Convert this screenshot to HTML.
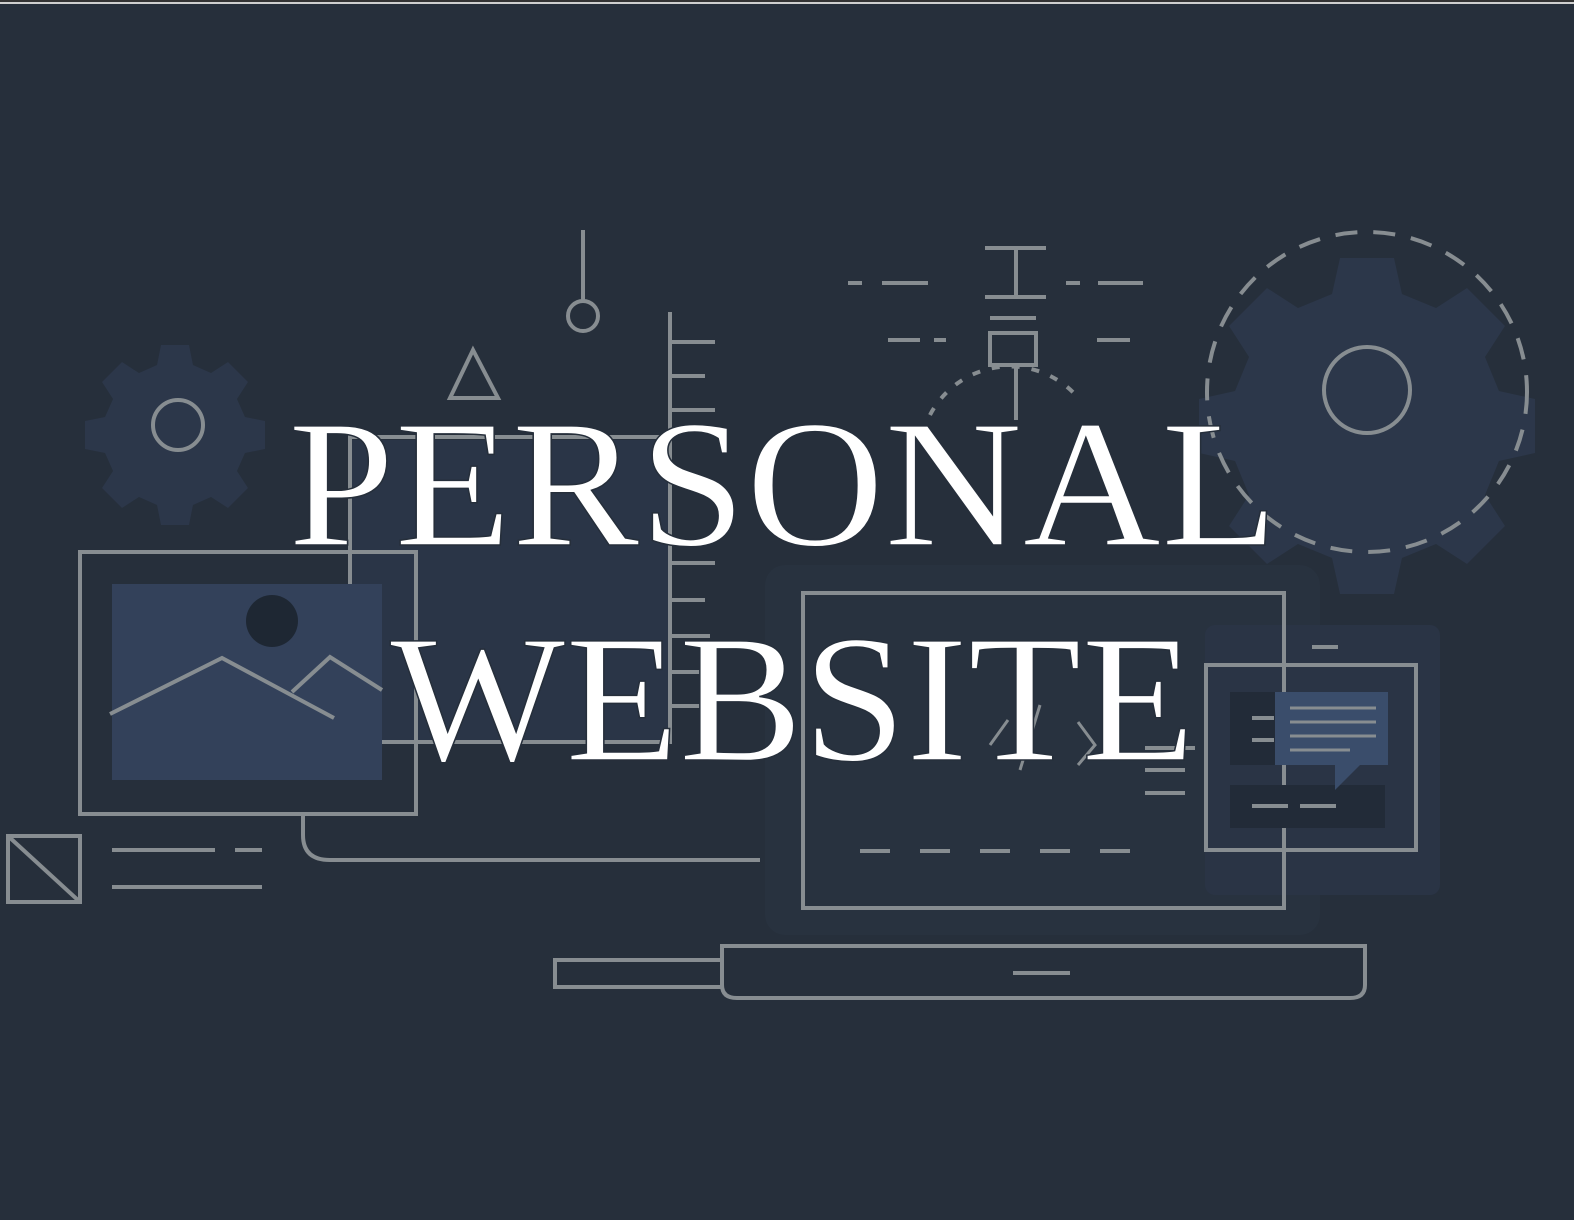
<!DOCTYPE html>
<html><head><meta charset="utf-8"><style>
html,body{margin:0;padding:0;background:#262f3b;width:1574px;height:1220px;overflow:hidden}
svg{display:block}
</style></head><body>
<svg width="1574" height="1220" viewBox="0 0 1574 1220" xmlns="http://www.w3.org/2000/svg">
<rect width="1574" height="1220" fill="#262f3b"/>
<rect x="0" y="0" width="1574" height="2" fill="#333"/>
<rect x="0" y="2" width="1574" height="2" fill="#cfcfcf"/>
<g fill="#2c374a">
<path d="M175 345 l14 0 4 20 18 8 17-11 20 20-11 17 8 18 20 4 0 28-20 4-8 18 11 17-20 20-17-11-18 8-4 20-28 0-4-20-18-8-17 11-20-20 11-17-8-18-20-4 0-28 20-4 8-18-11-17 20-20 17 11 18-8 4-20z"/>
<path d="M1340 258 l54 0 8 36 34 14 31-20 38 38-20 31 14 34 36 8 0 54-36 8-14 34 20 31-38 38-31-20-34 14-8 36-54 0-8-36-34-14-31 20-38-38 20-31-14-34-36-8 0-54 36-8 14-34-20-31 38-38 31 20 34-14z"/>
<rect x="350" y="440" width="320" height="300" fill="#2a3547"/>
<rect x="765" y="565" width="555" height="370" rx="20" fill="#28323f"/>
<rect x="1205" y="625" width="235" height="270" rx="10" fill="#2a3445"/>
</g>
<g fill="none" stroke="#878d91" stroke-width="4">
<circle cx="178" cy="425" r="25"/>
<circle cx="1367" cy="390" r="43"/>
<circle cx="1367" cy="392" r="160" stroke-dasharray="22 16"/>
<line x1="583" y1="230" x2="583" y2="300"/>
<circle cx="583" cy="316" r="15"/>
<path d="M473 350 L450 398 L498 398 Z"/>
<line x1="670" y1="312" x2="670" y2="740"/>
<path d="M670 342h45M670 376h35M670 410h45M670 563h45M670 600h35M670 636h40M670 672h35M670 706h45"/>
<rect x="350" y="437" width="320" height="305"/>
<rect x="80" y="552" width="336" height="262"/>
<rect x="112" y="584" width="270" height="196" fill="#33415a" stroke="none"/>
<circle cx="272" cy="621" r="26" fill="#1e2733" stroke="none"/>
<path d="M110 714 L222 658 L334 718 M292 692 L330 657 L382 690"/>
<path d="M303 814 V835 Q303 860 330 860 H760"/>
<rect x="8" y="836" width="72" height="66"/>
<line x1="8" y1="836" x2="80" y2="902"/>
<path d="M112 850h103M235 850h27M112 887h150"/>
<rect x="803" y="593" width="481" height="315"/>
<path d="M722 946 H1365 V985 Q1365 998 1350 998 H737 Q722 998 722 985 Z"/>
<rect x="555" y="960" width="167" height="27"/>
<line x1="1013" y1="973" x2="1070" y2="973"/>
<line x1="860" y1="851" x2="1160" y2="851" stroke-dasharray="30 30"/>
<rect x="1206" y="665" width="210" height="185"/>
<rect x="1230" y="785" width="155" height="43" fill="#222b38" stroke="none"/>
<rect x="1230" y="692" width="45" height="73" fill="#222b38" stroke="none"/>
<path d="M1252 806h36M1300 806h36M1252 718h22M1252 740h22"/>
<path d="M1145 770h40M1145 793h40M1145 748h50M1312 647h26"/>
<path d="M985 248h61M1016 248v50M985 297h61M990 318h46"/>
<rect x="990" y="333" width="46" height="32"/>
<line x1="1016" y1="365" x2="1016" y2="420"/>
<path d="M848 283h14M882 283h46M1066 283h14M1098 283h45M888 340h32M934 340h12M1097 340h33"/>
<path d="M930 415 A90 90 0 0 1 1080 400" stroke-dasharray="8 12"/>
<path d="M990 745 L1008 720 M1040 705 L1020 770 M1078 722 L1095 745 L1078 765" stroke-width="3"/>
</g>
<rect x="1275" y="692" width="113" height="73" fill="#3a4d6b"/>
<path d="M1335 765 L1360 765 L1335 790 Z" fill="#3a4d6b"/>
<path d="M1290 708h86M1290 722h86M1290 736h86M1290 750h60" stroke="#878d91" stroke-width="3"/>
<g font-family="'Liberation Serif',serif" fill="#ffffff" stroke="#262f3b" stroke-width="1.5">
<text x="288" y="545" font-size="182" textLength="990" lengthAdjust="spacingAndGlyphs">PERSONAL</text>
<text x="390" y="760" font-size="182" textLength="805" lengthAdjust="spacingAndGlyphs">WEBSITE</text>
</g>
</svg>
</body></html>
